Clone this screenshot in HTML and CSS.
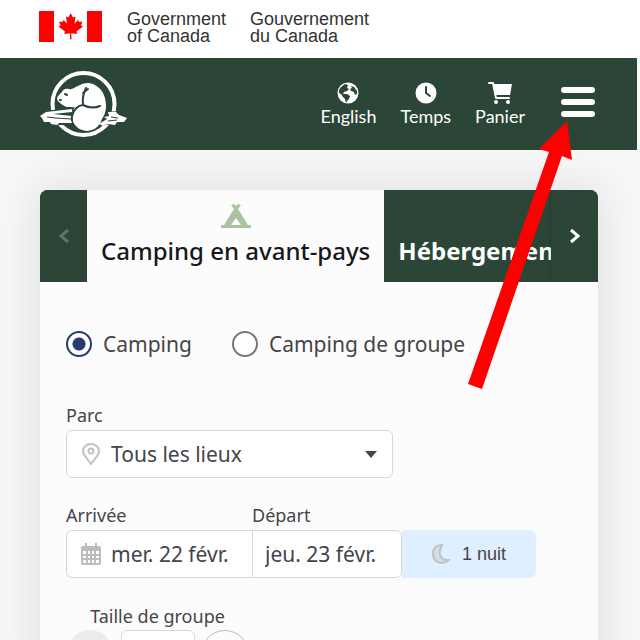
FILE: index.html
```html
<!DOCTYPE html>
<html lang="fr">
<head>
<meta charset="utf-8">
<meta name="viewport" content="width=device-width, initial-scale=1">
<title>Réservation – Parcs Canada</title>
<link rel="stylesheet" href="styles.css">
</head>
<body>
<div class="brand">
  <svg class="flag" viewBox="0 0 64 32" aria-hidden="true">
    <path fill="#fe0000" d="M0 0h15v31H0zM48 0h15v31H48z"/>
    <path fill="#fe0000" d="M31.500 2l2.500 4.500 2.500-1-1 7 3.500-3.500 1 2 3.500-.6-1.500 4 2 1-6.500 5 .8 2.600-6-.8.2 6h-1.500l.2-6-6 .8.800-2.600-6.500-5 2-1-1.500-4 3.500.6 1-2 3.500 3.500-1-7 2.500 1z"/>
  </svg>
  <span class="brand-name" lang="en">Government<br>of Canada</span>
  <span class="brand-name">Gouvernement<br>du Canada</span>
</div>

<header class="header">
  <a class="logo" href="#" aria-label="Parcs Canada">
    <svg viewBox="0 0 90 68" aria-hidden="true">
      <circle cx="44.500" cy="34" r="31" fill="none" stroke="#fff" stroke-width="4"/>
      <path fill="#2b4536" stroke="#2b4536" stroke-width="3" d="M10 42l23-3v15l-20-1zM66 43l14 0v8l-16 3z"/>
      <path fill="#fff" d="M1 46l6-4 26-3v3l-19 2 19 2v7l-13 0-2 2-6-1-1-2-6 0-2-4zM69 42l8 0 3 3 8 3-3 4-7 0-2 3-7-1-5 2-4-2 8-5-3-2 5-1z"/>
      <path fill="none" stroke="#2b4536" stroke-width="1" d="M8 47l8 1 16 1M72 47l7 1M69 51l9-1"/>
      <path fill="#fff" d="M18 29c0-3 3-5 5-7 1-3 4-4 7-3 3 1 6-2 9-3 5-3 10-4 15-2 9 4 13 12 13 22 0 7-3 13-8 17L42 38c-6-1-10-1-14-1-4-1-9-5-10-8z"/>
      <circle cx="48" cy="46" r="15" fill="#fff"/>
      <path fill="none" stroke="#2b4536" stroke-width="2" stroke-linecap="round" d="M33 51c-1-8 4-15 11-16 6 3 12 3 17 1M44 34c-1-7 1-12 3-16M44 23l5-4"/>
      <path fill="none" stroke="#2b4536" stroke-width="2" stroke-linecap="round" d="M26 24l2 1M21 30l1 0"/>
    </svg>
  </a>
  <nav class="nav">
    <a class="nav-item" href="#">
      <svg viewBox="0 0 22 22" aria-hidden="true">
        <circle cx="11" cy="11" r="10.500" fill="#fff"/>
        <path fill="#2b4536" d="M2 8l2-3 4-3 3 1-1 3 2 1-2 2-3 1-1 2h4l3 2-1 3-2 2-1 2-1-4-2-2-2-3-2-1zM14 4l3 1 3 4v3l-2 1-1-3-3-1-1-2 2-1z"/>
      </svg>
      English
    </a>
    <a class="nav-item" href="#">
      <svg viewBox="0 0 22 22" aria-hidden="true">
        <circle cx="11" cy="11" r="10.500" fill="#fff"/>
        <path fill="none" stroke="#2b4536" stroke-width="2" stroke-linecap="round" stroke-linejoin="round" d="M11 5v6l4 3"/>
      </svg>
      Temps
    </a>
    <a class="nav-item" href="#">
      <svg class="cart" viewBox="0 0 24 22" aria-hidden="true">
        <path fill="none" stroke="#fff" stroke-width="2" stroke-linecap="round" stroke-linejoin="round" d="M1 1h4l3 15h13"/>
        <path fill="#fff" d="M5 2h19l-2 11H8z"/>
        <circle cx="8" cy="20" r="2" fill="#fff"/><circle cx="20" cy="20" r="2" fill="#fff"/>
      </svg>
      Panier
    </a>
    <button class="menu" type="button" aria-label="Menu"><span></span><span></span><span></span></button>
  </nav>
</header>

<main class="main">
  <form class="card">
    <div class="tabs">
      <button class="tab-arrow previous" type="button" aria-label="Précédent" disabled>
        <svg viewBox="0 0 12 16" aria-hidden="true"><path d="M10 2L3 8l7 6"/></svg>
      </button>
      <button class="tab active" type="button">
        <svg class="tent" viewBox="0 0 30 24" aria-hidden="true">
          <path fill="#a9c3a0" fill-rule="evenodd" d="M10 1l3-1 2 2 2-2 3 1-3 4 10 16h3v3H0v-3h3L13 5zM15 14l-5 7h10z"/>
        </svg>
        <span>Camping en avant-pays</span>
      </button>
      <button class="tab next-tab" type="button"><span>Hébergement</span></button>
      <button class="tab-arrow next" type="button" aria-label="Suivant">
        <svg viewBox="0 0 12 16" aria-hidden="true"><path d="M2 2l7 6-7 6"/></svg>
      </button>
    </div>

    <div class="fields">
      <div class="radios">
        <label class="radio"><input type="radio" name="type" checked>Camping</label>
        <label class="radio"><input type="radio" name="type">Camping de groupe</label>
      </div>

      <div class="field park">
        <label for="park">Parc</label>
        <div class="control">
          <svg class="pin" viewBox="0 0 18 22" aria-hidden="true"><path d="M9 21C7 17 1 13 1 8a8 7 0 0 1 16 0c0 5-6 9-8 13z"/><circle cx="9" cy="8" r="2.500"/></svg>
          <select id="park"><option>Tous les lieux</option></select>
          <svg class="caret" viewBox="0 0 12 7" aria-hidden="true"><path d="M0 0h12L6 7z"/></svg>
        </div>
      </div>

      <div class="dates">
        <div class="field arrival">
          <label for="arrival">Arrivée</label>
          <div class="control">
            <svg class="calendar" viewBox="0 0 20 22" aria-hidden="true">
              <path fill="#bdbdbd" fill-rule="evenodd" d="M4 0h2v3h8V0h2v3h2q2 0 2 2v15q0 2-2 2H2q-2 0-2-2V5q0-2 2-2h2zM2 8v3h3V8zM7 8v3h6V8zM15 8v3h3V8zM2 13v2h3v-2zM7 13v2h6v-2zM15 13v2h3v-2zM2 17v3h3v-3zM7 17v3h6v-3zM15 17v3h3v-3z"/>
              <path fill="#bdbdbd" d="M9 7h2v14H9z"/>
            </svg>
            <input id="arrival" type="text" value="mer. 22 févr.">
          </div>
        </div>
        <div class="field departure">
          <label for="departure">Départ</label>
          <div class="control"><input id="departure" type="text" value="jeu. 23 févr."></div>
        </div>
        <div class="nights">
          <svg viewBox="0 0 18 20" aria-hidden="true"><path d="M10 1C3 1 1 5 1 10c0 8 9 12 16 6C9 17 5 10 10 1z"/></svg>
          1 nuit
        </div>
      </div>

      <div class="group">
        <label for="size">Taille de groupe</label>
        <div class="stepper">
          <button class="step" type="button" aria-label="Moins" disabled></button>
          <input id="size" type="text">
          <button class="step" type="button" aria-label="Plus"></button>
        </div>
      </div>
    </div>
  </form>
</main>

<svg class="pointer" viewBox="0 0 106 270" aria-hidden="true">
  <path fill="#fe0000" d="M99 1l5 39-10-4L14 269 0 264 81 32l-10-3z"/>
</svg>
</body>
</html>
```
FILE: styles.css
```css
* { box-sizing: border-box; }

html { height: 100%; overflow: hidden; }

body {
  position: relative;
  margin: 0;
  height: 100%;
  overflow: hidden;
  background: #f8f8f8;
  color: #444549;
  font-family: "Noto Sans", "Open Sans", sans-serif;
  font-size: 21px;
}

button, input, select { font: inherit; color: inherit; }
button { padding: 0; border: 0; background: none; }
a { color: inherit; text-decoration: none; }
svg { display: block; flex: none; }

.brand {
  display: flex;
  align-items: flex-start;
  gap: 24px;
  height: 58px;
  padding: 11px 39px 0;
  background: #fff;
}
.flag { width: 64px; height: 32px; }
.brand-name {
  color: #333;
  font: 18px/17px "Liberation Sans", Arial, sans-serif;
}

.header {
  display: flex;
  align-items: center;
  justify-content: space-between;
  height: 92px;
  margin-right: 3px;
  padding: 0 42px 0 39px;
  background: #2b4536;
}
.logo svg { width: 90px; height: 68px; }
.nav {
  display: flex;
  align-items: center;
  gap: 24px;
  color: #fff;
  font: 18px/22px Lato, sans-serif;
}
.nav-item {
  display: flex;
  flex-direction: column;
  align-items: center;
  gap: 1px;
}
.nav-item svg { width: 22px; height: 22px; }
.nav-item .cart { width: 24px; }
.menu {
  display: grid;
  gap: 6px;
  width: 34px;
  margin: 0 0 4px 12px;
}
.menu span { height: 6px; border-radius: 3px; background: #fff; }

.main { padding: 40px 42px 0 40px; }
.card {
  border-radius: 8px;
  background: #fcfcfc;
  box-shadow: 0 0 48px 8px rgba(0, 0, 0, 0.09);
}
.tabs {
  display: flex;
  height: 92px;
  overflow: hidden;
  border-radius: 8px 8px 0 0;
  background: #2b4536;
  color: #fff;
}
.tab-arrow {
  display: grid;
  flex: 0 0 47px;
  place-items: center;
  background: #2b4536;
}
.tab-arrow svg { width: 12px; height: 16px; }
.tab-arrow path { fill: none; stroke: #fff; stroke-width: 3; }
.previous path { stroke: #5b7565; }
.next { box-shadow: -1px 0 2px rgba(0, 0, 0, 0.15); }
.tab {
  display: flex;
  flex-direction: column;
  align-items: center;
  justify-content: flex-end;
  gap: 6px;
  padding: 0 14px 14px;
  font-size: 24px;
  line-height: 34px;
  white-space: nowrap;
}
.active { background: #fcfcfc; color: #16181c; font-weight: 500; }
.next-tab {
  flex: 1;
  min-width: 0;
  align-items: flex-start;
  overflow: hidden;
  padding-right: 0;
  font-weight: 700;
}
.tent { width: 30px; height: 24px; }

.fields { padding: 46px 26px 0; }
.radios { display: flex; gap: 40px; }
.radio {
  display: flex;
  align-items: center;
  gap: 11px;
  height: 32px;
}
.radio input {
  appearance: none;
  width: 26px;
  height: 26px;
  margin: 0;
  border: 2px solid #77777a;
  border-radius: 50%;
  background: #fff;
}
.radio input:checked {
  border-color: #263a74;
  background: radial-gradient(circle, #263a74 6px, #fff 7px);
}

.field label, .group label {
  display: block;
  font-size: 18px;
  line-height: 26px;
}
.control {
  display: flex;
  align-items: center;
  height: 48px;
  margin-top: 2px;
  border: 1px solid #d8d8d8;
  border-radius: 6px;
  background: #fff;
}
.control input, .control select {
  flex: 1;
  appearance: none;
  width: 100%;
  min-width: 0;
  height: 44px;
  padding: 0;
  border: 0;
  background: none;
}
.park { width: 327px; margin-top: 42px; }
.park .control { gap: 11px; padding: 0 15px; }
.pin { width: 18px; height: 22px; fill: none; stroke: #c2c2c2; stroke-width: 2; }
.caret { width: 12px; height: 7px; fill: #444549; }

.dates { display: flex; align-items: flex-end; margin-top: 24px; }
.arrival { width: 186px; }
.arrival .control {
  gap: 10px;
  padding-left: 14px;
  border-right: 0;
  border-radius: 6px 0 0 6px;
}
.calendar { width: 20px; height: 22px; }
.departure { width: 150px; }
.departure .control {
  padding-left: 12px;
  border-radius: 0 6px 6px 0;
}
.nights {
  display: flex;
  align-items: center;
  justify-content: center;
  gap: 12px;
  width: 134px;
  height: 48px;
  border-radius: 0 6px 6px 0;
  background: #e0efff;
  font: 18px/24px "Liberation Sans", Arial, sans-serif;
}
.nights svg { width: 18px; height: 20px; fill: #d7dce1; stroke: #bdc3c9; stroke-width: 2; }

.group { width: 183px; margin-top: 25px; }
.group label { text-align: center; }
.stepper {
  display: flex;
  align-items: center;
  justify-content: space-between;
  margin-top: 1px;
}
.step {
  width: 48px;
  height: 48px;
  border: 1px solid #bcbcbc;
  border-radius: 50%;
}
.step:disabled { border-color: #ececec; background: #ececec; }
.stepper input {
  width: 74px;
  height: 48px;
  border: 1px solid #d8d8d8;
  border-radius: 6px;
  background: #fff;
}

.pointer {
  position: absolute;
  top: 120px;
  right: 66px;
  width: 106px;
  height: 270px;
  pointer-events: none;
}
```
